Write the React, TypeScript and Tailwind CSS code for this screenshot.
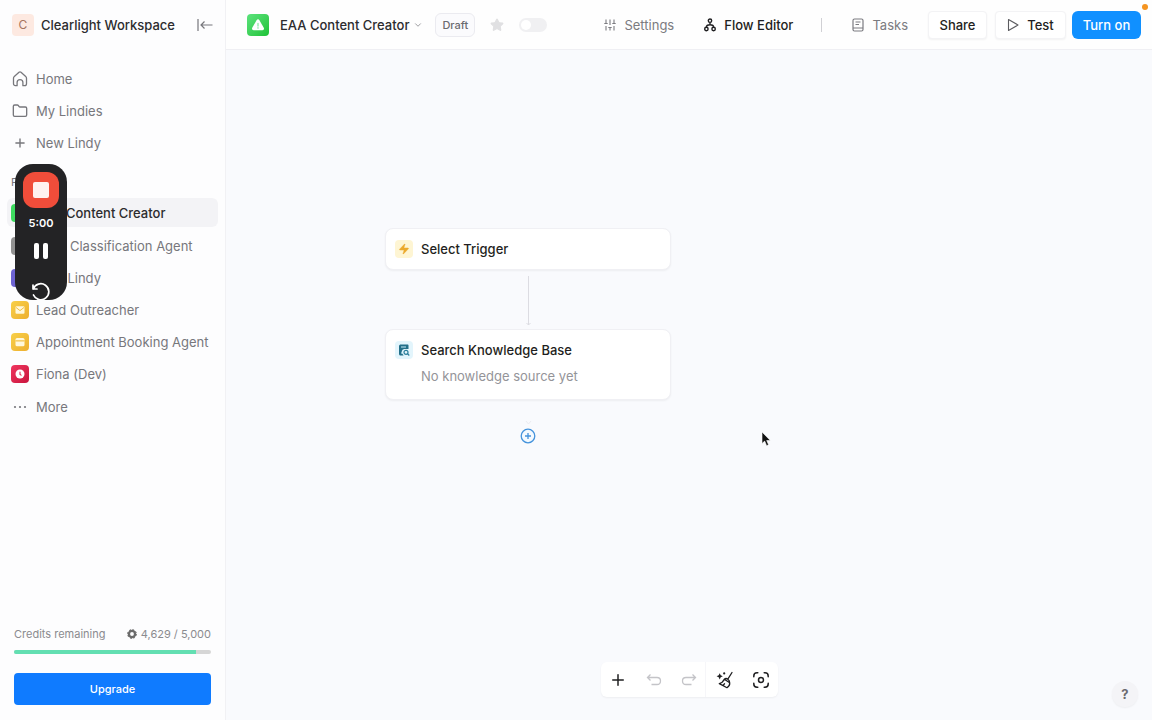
import { useState } from 'react'
import type { ReactNode } from 'react'
import { ChevronDown, Folder, Plus, Star, Zap } from 'lucide-react'

interface Agent {
  name: string
  color: string
  icon: ReactNode
}

const AlertGlyph = ({ className }: { className: string }) => (
  <svg viewBox="0 0 16 16" className={className} aria-hidden="true">
    <path d="M8 1.5c.7 0 1.2.4 1.6 1l5 8.6c.7 1.3-.1 2.9-1.6 2.900H3c-1.500 0-2.300-1.600-1.600-2.900l5-8.600c.4-.6.9-1 1.600-1z" fill="#fff" />
    <path d="M8 6v3.200M8 11v.6" stroke="#86e8a0" strokeWidth="1.400" strokeLinecap="round" />
  </svg>
)

const MailGlyph = () => (
  <svg viewBox="0 0 16 16" className="w-3 h-3" aria-hidden="true">
    <rect x="2" y="3" width="12" height="10" rx="1.500" fill="#fff8dc" />
    <path d="M2.500 4.500 8 8.800l5.500-4.300" fill="none" stroke="#f2bd3a" strokeWidth="1.300" />
  </svg>
)

const CalendarGlyph = () => (
  <svg viewBox="0 0 16 16" className="w-3 h-3" aria-hidden="true">
    <rect x="2" y="2.500" width="12" height="11" rx="2" fill="#fff8dc" />
    <path d="M2 6.500h12" stroke="#f2bd3a" strokeWidth="1.500" />
  </svg>
)

const ClockGlyph = () => (
  <svg viewBox="0 0 16 16" className="w-3 h-3" aria-hidden="true">
    <circle cx="8" cy="8" r="6" fill="#fff" />
    <path d="M8 5.500v3l1.500 1" fill="none" stroke="#e11d48" strokeWidth="1.400" strokeLinecap="round" />
  </svg>
)

const HomeIcon = () => (
  <svg viewBox="0 0 16 16" className="w-4 h-4" fill="none" stroke="currentColor" strokeWidth="1.300" strokeLinejoin="round" aria-hidden="true">
    <path d="M1.500 7.200c0-.7.300-1.300.8-1.700L7 1.300c.6-.5 1.400-.5 2 0l4.700 4.200c.5.4.8 1 .8 1.700v5.600c0 1.100-.8 1.900-1.900 1.900h-1.700V11.500a2.900 2.900 0 0 0-5.800 0v3.200H3.400c-1.100 0-1.900-.8-1.900-1.900z" />
  </svg>
)

const CollapseIcon = () => (
  <svg viewBox="0 0 16 14" className="w-4 h-3.5" fill="none" stroke="currentColor" strokeWidth="1.200" aria-hidden="true">
    <path d="M1 1v12M15.500 7H4M7.500 3.500 4 7l3.500 3.500" />
  </svg>
)

const SlidersIcon = () => (
  <svg viewBox="0 0 12 12" className="w-3 h-3" fill="none" stroke="currentColor" strokeWidth="1.100" aria-hidden="true">
    <path d="M2 .5v4M2 7v4.500M6 .5v5.500M6 8.500v3M10 .5v4M10 7v4.500M.3 4.500h3.400M4.300 8.500h3.400M8.300 4.500h3.400" />
  </svg>
)

const FlowIcon = () => (
  <svg viewBox="0 0 12 14" className="w-3 h-3.5" fill="none" stroke="currentColor" strokeWidth="1.400" aria-hidden="true">
    <circle cx="6" cy="2.700" r="1.700" />
    <circle cx="2.400" cy="11" r="1.700" />
    <circle cx="9.600" cy="11" r="1.700" />
    <path d="M6 4.400v2.400M2.400 9.300C2.400 7.500 3.800 6.800 6 6.800s3.600.7 3.600 2.500" />
  </svg>
)

const TasksIcon = () => (
  <svg viewBox="0 0 12 14" className="w-3 h-3.5" fill="none" stroke="currentColor" strokeWidth="1.200" aria-hidden="true">
    <rect x="1" y="1" width="10" height="12" rx="1.500" />
    <path d="M1 10h10M3.500 4h5M3.500 6.500h3.500" />
  </svg>
)

const PlayIcon = () => (
  <svg viewBox="0 0 12 14" className="w-3 h-3.5 text-[#5c5c60]" fill="none" stroke="currentColor" strokeWidth="1.100" strokeLinejoin="round" aria-hidden="true">
    <path d="M1.500 1.500 11 7l-9.500 5.500z" />
  </svg>
)

const CreditIcon = () => (
  <svg viewBox="0 0 12 12" className="w-2.5 h-2.5" fill="none" stroke="#6b6b6b" aria-hidden="true">
    <circle cx="6" cy="6" r="3.700" strokeWidth="2.800" />
    <circle cx="6" cy="6" r="5.300" strokeWidth="1.200" strokeDasharray="2.200 1.950" />
  </svg>
)

const KnowledgeIcon = () => (
  <svg viewBox="0 0 12 12" className="w-3 h-3" fill="none" aria-hidden="true">
    <path d="M2.800.5h6.700c.6 0 1 .4 1 1V5H7a3 3 0 0 0-2 5.500l.6 1H2.500c-.8 0-1.500-.7-1.500-1.500V2C1 1.200 1.900.5 2.800.5z" fill="#23708a" />
    <path d="M3 3h5M3 9h1.500" stroke="#c9ecf8" strokeWidth="1" />
    <circle cx="8" cy="8.300" r="2" stroke="#2b7f9c" strokeWidth="1.200" />
    <path d="m9.500 9.800 1.800 1.700" stroke="#2b7f9c" strokeWidth="1.200" />
  </svg>
)

const UndoIcon = ({ className }: { className: string }) => (
  <svg viewBox="0 0 16 14" className={className} fill="none" stroke="currentColor" strokeWidth="1.300" aria-hidden="true">
    <path d="M4.500 1.500 1.500 4.500l3 3M1.500 4.500h9.500c2 0 3.500 1.400 3.500 3.500s-1.500 3.500-3.500 3.500H5.500" />
  </svg>
)

const TidyIcon = () => (
  <svg viewBox="0 0 18 18" className="w-4.5 h-4.5" fill="none" stroke="currentColor" strokeWidth="1.300" strokeLinejoin="round" strokeLinecap="round" aria-hidden="true">
    <path d="M16 1.500 11.800 8.200M8.300 8.300l5.400 3.400c.3 2-.7 3.800-2.700 5L3.300 12.600c2-.4 3.900-2 5-4.300zM7 14.500l1.500-1.700M8.300 8.300c1-.9 2.400-.9 3.500-.1s1.900 2 1.900 3.500" />
    <path d="m3.700 2.200 1 2.100 2.100 1-2.100 1-1 2.100-1-2.100-2.100-1 2.100-1z" fill="currentColor" stroke="none" />
    <circle cx="8.200" cy="2.400" r="1.100" fill="currentColor" stroke="none" />
  </svg>
)

const FocusIcon = () => (
  <svg viewBox="0 0 18 18" className="w-4.5 h-4.5" fill="none" stroke="currentColor" strokeWidth="1.500" strokeLinecap="round" aria-hidden="true">
    <circle cx="9" cy="9" r="2.500" />
    <path d="M1.800 5.800V5c0-1.800 1.400-3.200 3.200-3.200h.8M12.200 1.800h.8c1.800 0 3.200 1.400 3.200 3.200v.8M16.200 12.200v.8c0 1.800-1.400 3.200-3.200 3.200h-.8M5.800 16.200H5c-1.800 0-3.200-1.400-3.200-3.200v-.8" />
  </svg>
)

const AGENTS: Agent[] = [
  { name: 'EAA Content Creator', color: 'bg-[#3ddb5f]', icon: <AlertGlyph className="w-3 h-3" /> },
  { name: 'Lead Classification Agent', color: 'bg-[#929292]', icon: <MailGlyph /> },
  { name: 'New Lindy', color: 'bg-[#6d63d2]', icon: <ClockGlyph /> },
  { name: 'Lead Outreacher', color: 'bg-linear-to-br from-[#f8d048] to-[#edaf2f]', icon: <MailGlyph /> },
  { name: 'Appointment Booking Agent', color: 'bg-linear-to-br from-[#f8d048] to-[#edaf2f]', icon: <CalendarGlyph /> },
  { name: 'Fiona (Dev)', color: 'bg-linear-to-br from-[#f0365f] to-[#c9123d]', icon: <ClockGlyph /> },
]

const CREDITS = { left: 4629, total: 5000 }

function Sidebar() {
  const row = 'flex items-center gap-[7px] pl-1 rounded-md whitespace-nowrap'

  return (
    <aside className="flex flex-col w-[226px] shrink-0 border-r border-[#f1f1f4] bg-[#fdfdfe] text-[#77777c]">
      <div className="flex items-center h-[50px] px-3">
        <span className="flex items-center justify-center w-[22px] h-[22px] rounded bg-[#fde9e1] text-[#a5745f] text-xs">C</span>
        <span className="ml-[7px] font-medium text-[#2c2c2e]">Clearlight Workspace</span>
        <button aria-label="Collapse sidebar" className="ml-auto"><CollapseIcon /></button>
      </div>

      <nav className="px-[7px] pt-[13px]">
        <a href="#home" className={`${row} h-8`}><span className="flex justify-center w-[18px]"><HomeIcon /></span>Home</a>
        <a href="#lindies" className={`${row} h-8`}><span className="flex justify-center w-[18px]"><Folder className="w-4 h-4" strokeWidth={2} /></span>My Lindies</a>
        <a href="#new" className={`${row} h-8`}><span className="flex justify-center w-[18px]"><Plus className="w-3.5 h-3.5" strokeWidth={2.4} /></span>New Lindy</a>

        <h2 className="mt-3 pl-1 h-[26px] leading-[22px] text-[11px]">Pinned</h2>
        <ul>
          {AGENTS.map((agent, i) => (
            <li key={agent.name}>
              <a href="#agent" className={`${row} ${i === 0 ? 'h-[29px] mt-px mb-[3px] bg-[#f3f3f6] text-[#2c2c2e] font-medium' : 'h-8'}`}>
                <span className={`flex items-center justify-center w-[18px] h-[18px] rounded ${agent.color}`}>{agent.icon}</span>
                {agent.name}
              </a>
            </li>
          ))}
        </ul>
        <button className={`${row} h-8 mt-px`}>
          <svg viewBox="0 0 18 4" className="w-[18px] h-1" fill="currentColor" aria-hidden="true">
            <circle cx="4" cy="2" r="1.100" /><circle cx="9" cy="2" r="1.100" /><circle cx="14" cy="2" r="1.100" />
          </svg>
          More
        </button>
      </nav>

      <div className="mt-auto px-[14px] pb-[15px]">
        <div className="flex items-center text-[11px] leading-4 text-[#8b8b8f]">
          <span>Credits remaining</span>
          <span className="ml-auto flex items-center gap-1">
            <CreditIcon />
            {CREDITS.left.toLocaleString('en-US')} / {CREDITS.total.toLocaleString('en-US')}
          </span>
        </div>
        <div className="mt-2 h-1 rounded-full bg-[#d6d6d6] overflow-hidden">
          <div className="h-full bg-[#63dfb2]" style={{ width: `${(CREDITS.left / CREDITS.total) * 100}%` }} />
        </div>
        <button className="mt-[19px] w-full h-8 rounded bg-[#0f7bff] text-white text-[11px] font-medium">Upgrade</button>
      </div>
    </aside>
  )
}

function Header() {
  const [enabled, setEnabled] = useState(false)

  return (
    <header className="relative flex items-center h-[50px] pl-[21px] pr-[11px] border-b border-[#efeff3] bg-[#fefefe]">
      <span className="flex items-center justify-center w-[22px] h-[22px] rounded bg-linear-to-br from-[#5be37c] to-[#19c234]">
        <AlertGlyph className="w-3.5 h-3.5" />
      </span>
      <button className="flex items-center gap-1 ml-[11px] font-medium text-[#2c2c2e]">
        EAA Content Creator
        <ChevronDown className="w-2.5 h-2.5 text-[#8b8b8f]" />
      </button>
      <span className="ml-3 flex items-center h-6 px-1.5 rounded-md border border-[#ebebf0] bg-[#fbfbfd] text-[11px] text-[#6b6b70] font-medium">Draft</span>
      <button aria-label="Favorite" className="ml-[15px]"><Star className="w-3.5 h-3.5 fill-[#e0e0e2] text-[#e0e0e2]" /></button>
      <label className="ml-[15px] flex">
        <input type="checkbox" role="switch" aria-label="Enabled" checked={enabled} onChange={e => setEnabled(e.target.checked)} className="peer sr-only" />
        <span className="flex w-7 h-[14px] p-0.5 rounded-full bg-[#f0f0f2] peer-checked:bg-[#1090ff] peer-checked:justify-end">
          <span className="w-2.5 h-2.5 rounded-full bg-white" />
        </span>
      </label>

      <nav className="flex items-center ml-auto text-[#7b7b80]">
        <a href="#settings" className="flex items-center gap-2"><SlidersIcon />Settings</a>
        <a href="#flow" className="flex items-center gap-2 ml-[30px] font-medium text-[#1f1f21]"><FlowIcon />Flow Editor</a>
        <span className="ml-7 w-px h-[14px] bg-[#d0d0d4]" />
        <a href="#tasks" className="flex items-center gap-2 ml-[30px]"><TasksIcon />Tasks</a>
      </nav>
      <button className="ml-5 w-[59px] h-7 rounded border border-[#f3f3f5] bg-white font-medium text-[#1f1f21] shadow-xs">Share</button>
      <button className="ml-2 w-[71px] h-7 flex items-center justify-center gap-2 rounded border border-[#f3f3f5] bg-white font-medium text-[#1f1f21] shadow-xs">
        <PlayIcon />Test
      </button>
      <button className="ml-1.5 w-[69px] h-7 rounded-md bg-[#1090ff] font-medium text-white">Turn on</button>
      <span className="absolute top-1 right-1 w-1.5 h-1.5 rounded-full bg-[#f59420]" />
    </header>
  )
}

function Canvas() {
  const card = 'rounded-lg border border-[#f0f0f4] bg-white shadow-xs'

  return (
    <main className="relative flex-1 bg-[#f9fafd] text-[#1f1f21]">
      <div className="absolute left-[159px] top-[178px] flex flex-col items-center w-[286px]">
        <button className={`${card} flex items-center gap-2 w-full h-[42px] px-[9px] font-medium`}>
          <span className="flex items-center justify-center w-[18px] h-[18px] rounded bg-[#fef5d3]">
            <Zap className="w-3 h-3 fill-[#eba92c] text-[#eba92c]" strokeWidth={1} />
          </span>
          Select Trigger
        </button>

        <svg viewBox="0 0 10 59" className="w-2.5 h-[59px]" fill="none" stroke="#dcdce2" aria-hidden="true">
          <path d="M5.500 6v49M3.500 53l2 2 2-2" />
        </svg>

        <button className={`${card} flex flex-col w-full h-[71px] px-[9px] pt-[10px] text-left`}>
          <span className="flex items-center gap-2 font-medium leading-5">
            <span className="flex items-center justify-center w-[18px] h-[18px] rounded bg-[#e3f5fc]"><KnowledgeIcon /></span>
            Search Knowledge Base
          </span>
          <span className="mt-1.5 pl-[26px] leading-5 text-[#949499]">No knowledge source yet</span>
        </button>

        <svg viewBox="0 0 10 28" className="w-2.5 h-7" fill="none" stroke="#ebebf0" aria-hidden="true">
          <path d="m3 21 2.500 3L8 21" />
        </svg>
        <button aria-label="Add step" className="text-[#4593dc]">
          <svg viewBox="0 0 16 16" className="w-4 h-4" fill="none" stroke="currentColor" strokeWidth="1.300" aria-hidden="true">
            <circle cx="8" cy="8" r="6.800" fill="#f5faff" />
            <path d="M8 5v6M5 8h6" />
          </svg>
        </button>
      </div>

      <div className="absolute bottom-[23px] inset-x-0 flex justify-center pointer-events-none">
        <div className="flex h-[35px] rounded-md bg-white shadow-xs pointer-events-auto">
          <button aria-label="Add" className="flex items-center justify-center w-[34px]"><Plus className="w-4.5 h-4.5" strokeWidth={2} /></button>
          <button aria-label="Undo" className="flex items-center justify-center w-[38px] text-[#c4c4c8]"><UndoIcon className="w-4 h-3.5" /></button>
          <button aria-label="Redo" className="flex items-center justify-center w-[32px] text-[#c4c4c8]"><UndoIcon className="w-4 h-3.5 -scale-x-100" /></button>
          <button aria-label="Tidy up" className="flex items-center justify-center w-[39px] border-l border-[#f6f6f9]"><TidyIcon /></button>
          <button aria-label="Fit to view" className="flex items-center justify-center w-[34px]"><FocusIcon /></button>
        </div>
      </div>

      <button aria-label="Help" className="absolute bottom-[13px] right-[14px] w-[26px] h-[26px] rounded-full bg-[#f4f4f7] text-[#6b6b70] font-bold shadow-xs">?</button>

      <svg viewBox="0 0 10 16" className="absolute left-[535px] top-[381px] w-2.5 h-4" aria-hidden="true">
        <path d="M1 1v11.500l2.700-2.400 1.900 4.600 2-.9-1.900-4.300H9.300z" fill="#111" stroke="#fff" strokeWidth=".6" />
      </svg>
    </main>
  )
}

// floating screen recorder, sits on top of the sidebar
function Recorder() {
  return (
    <div className="absolute left-[15px] top-[164px] flex flex-col items-center w-[52px] h-[136px] pt-2 rounded-[18px] bg-[#232325] text-white overflow-hidden">
      <button aria-label="Stop recording" className="flex items-center justify-center w-9 h-9 shrink-0 rounded-xl bg-[#f04d3a]">
        <span className="w-4 h-4 rounded-xs bg-[#fff1ef]" />
      </button>
      <span className="mt-[7px] text-[11px] leading-4 font-semibold">5:00</span>
      <button aria-label="Pause" className="flex gap-1 mt-3">
        <span className="w-[5px] h-4 rounded-xs bg-white" />
        <span className="w-[5px] h-4 rounded-xs bg-white" />
      </button>
      <button aria-label="Restart" className="mt-[23px] shrink-0">
        <svg viewBox="0 0 20 20" className="w-5 h-5" fill="none" stroke="currentColor" strokeWidth="1.700" strokeLinecap="round" strokeLinejoin="round" aria-hidden="true">
          <path d="M2 3v4h4M2.300 7A8 8 0 1 1 2.500 13" />
        </svg>
      </button>
    </div>
  )
}

export default function App() {
  return (
    <div className="relative flex h-screen overflow-hidden font-['Inter',sans-serif] text-[13px] leading-5">
      <Sidebar />
      <div className="flex flex-col flex-1 min-w-0">
        <Header />
        <Canvas />
      </div>
      <Recorder />
    </div>
  )
}
